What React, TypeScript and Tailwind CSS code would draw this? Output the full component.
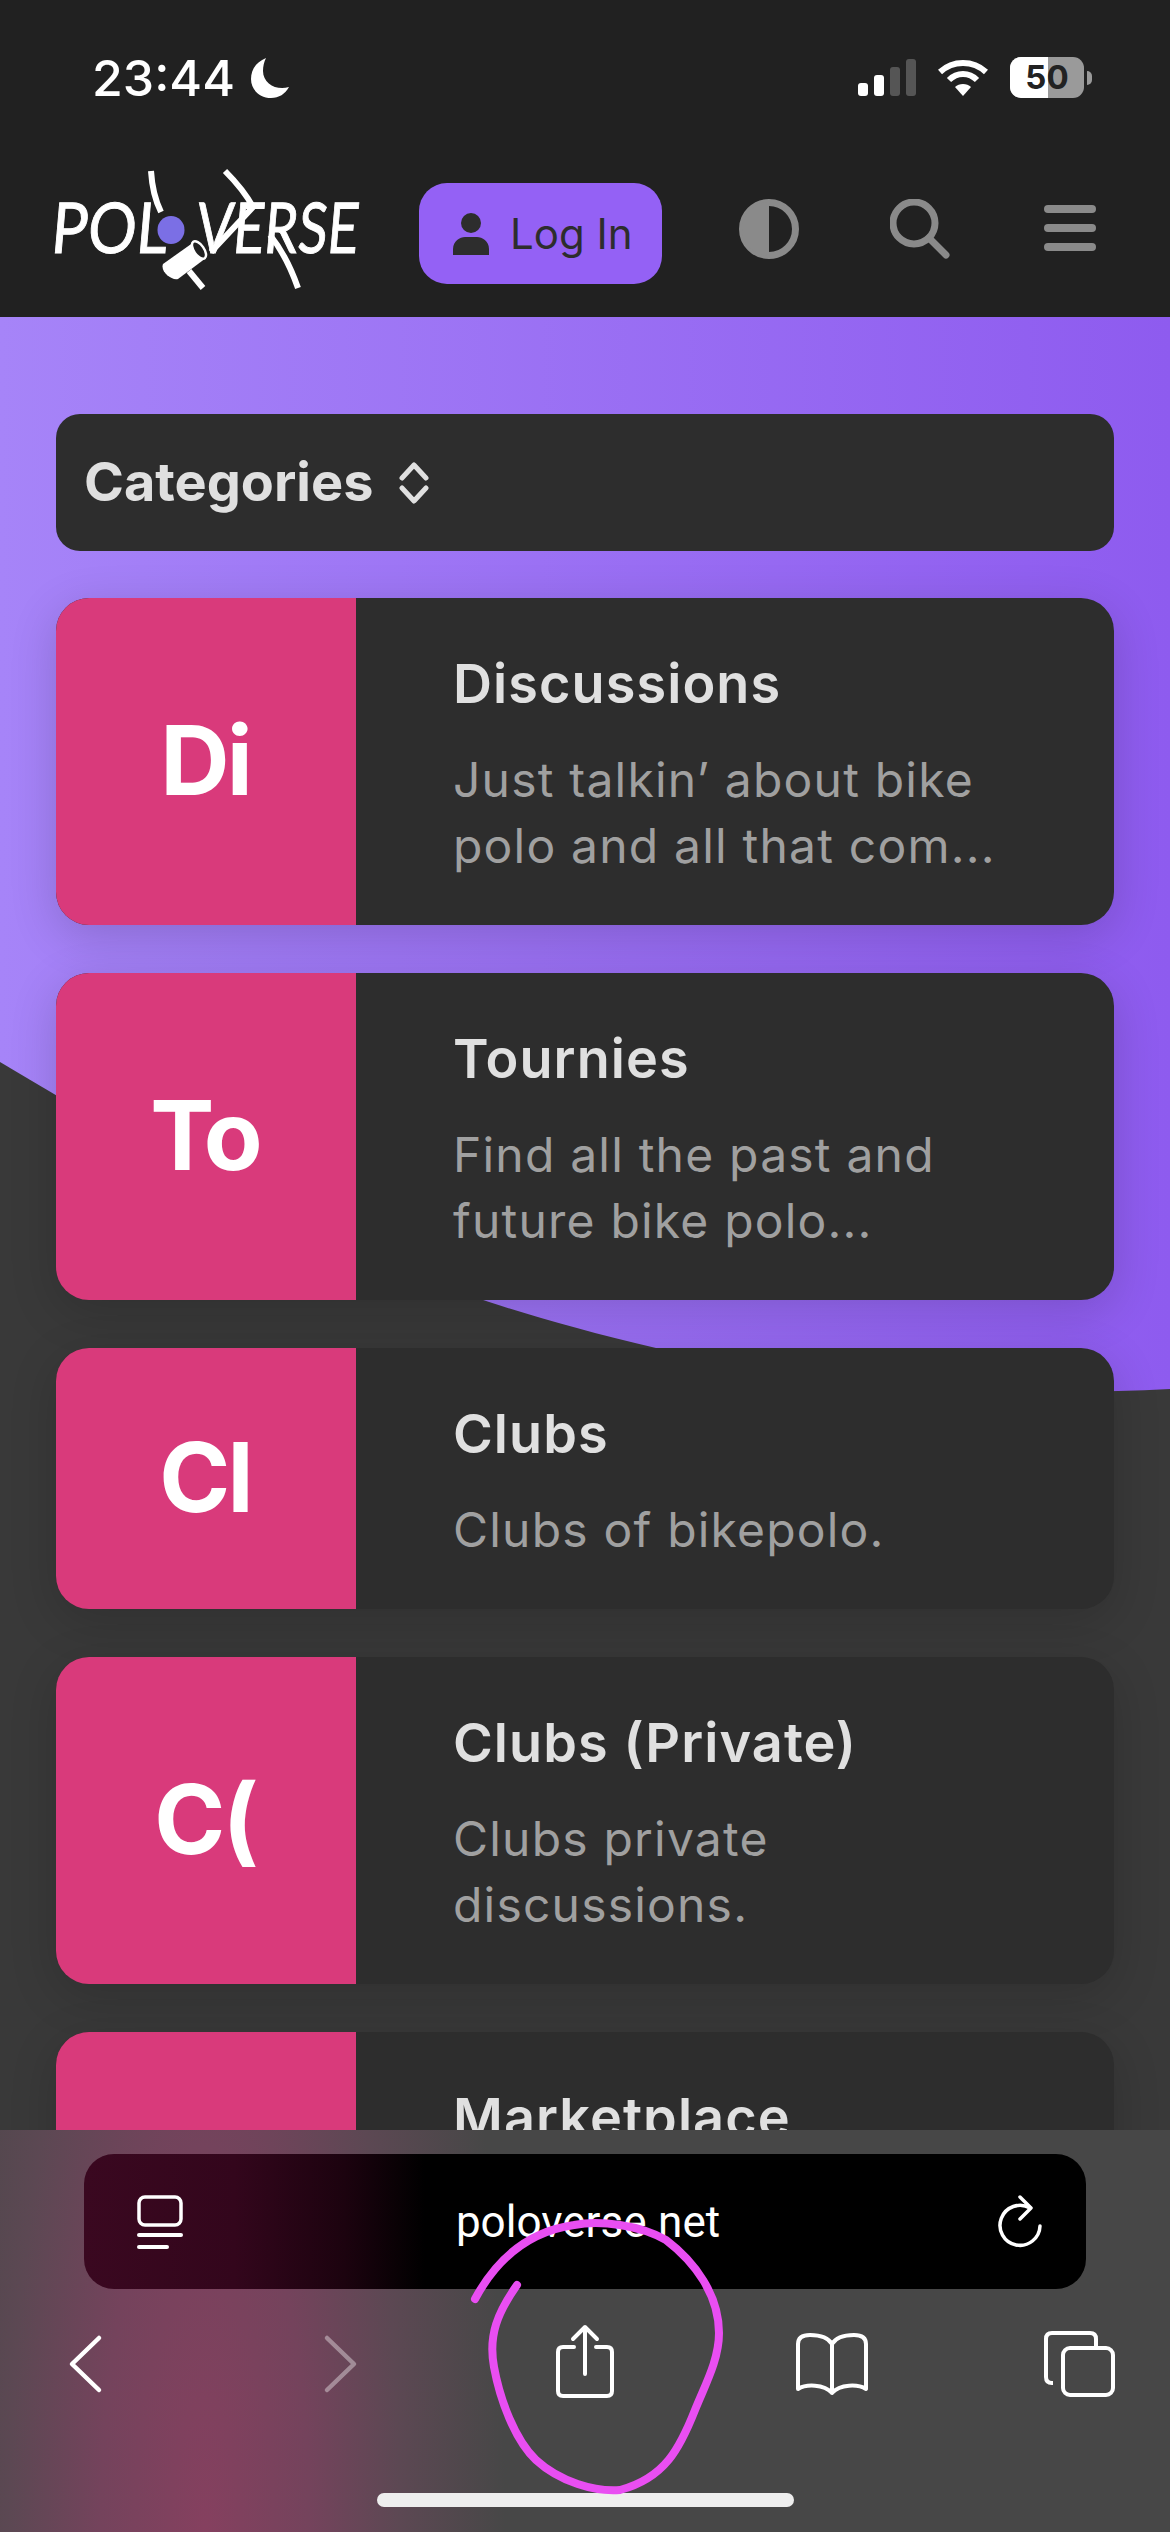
import React from "react";

const cards = [
  { m: "Di", t: "Discussions", d: "Just talkin’ about bike polo and all that com..." },
  { m: "To", t: "Tournies", d: "Find all the past and future bike polo..." },
  { m: "Cl", t: "Clubs", d: "Clubs of bikepolo." },
  { m: "C(", t: "Clubs (Private)", d: "Clubs private discussions." },
  { m: "", t: "Marketplace", d: "" },
];

function Logo() {
  return (
    <svg width="306" height="115" viewBox="52 171 306 115" className="shrink-0 overflow-visible">
      <g fill="#fff" stroke="#fff" strokeWidth="1" fontFamily="Lato, sans-serif" fontSize="70" fontWeight="400" transform="skewX(-5)">
        <text x="72" y="253" textLength="116" lengthAdjust="spacingAndGlyphs">POL</text>
        <text x="217" y="253" textLength="162" lengthAdjust="spacingAndGlyphs">VERSE</text>
      </g>
      <ellipse cx="171" cy="230" rx="13.5" ry="14" fill="#7b6fe5" />
      <path d="M151 171C152 187 155 200 161 212" fill="none" stroke="#fff" strokeWidth="6" />
      <path d="M225 171C236 182 246 194 253 207L211 252" fill="none" stroke="#fff" strokeWidth="6" />
      <path d="M270 235C282 250 291 268 298 288" fill="none" stroke="#fff" strokeWidth="6" />
      <path d="M189 271L203 288" fill="none" stroke="#fff" strokeWidth="6" />
      <path d="M163 264L194 242C200 240 207 252 206 258L178 279C172 281 160 272 163 264Z" fill="#fff" />
      <ellipse cx="199" cy="250" rx="5" ry="10" transform="rotate(-35 199 250)" fill="#212121" stroke="#fff" strokeWidth="2.5" />
    </svg>
  );
}

function StatusBar() {
  return (
    <div className="flex h-[117px] items-start justify-between pt-[57px] pl-[92px] pr-[78px]">
      <div className="flex items-center gap-[16px]">
        <span className="font-['Inter'] text-[50px] leading-[42px] font-medium text-white">23:44</span>
        <svg width="38" height="40" viewBox="0 0 38 40">
          <path d="M15 0C5 4 0 12 0 21C0 32 9 40 20 40C28 40 34 36 38 29C26 33 12 26 12 13C12 8 13 4 15 0Z" fill="#fff" />
        </svg>
      </div>
      <div className="flex items-center gap-[22px] h-[41px]">
        <svg width="58" height="37" viewBox="0 0 58 37">
          <rect x="0" y="24" width="10" height="13" rx="3" fill="#fff" />
          <rect x="16" y="16" width="10" height="21" rx="3" fill="#fff" />
          <rect x="32" y="8" width="10" height="29" rx="3" fill="#555" />
          <rect x="48" y="0" width="10" height="37" rx="3" fill="#555" />
        </svg>
        <svg width="50" height="37" viewBox="0 0 50 37">
          <path d="M2 13C15 1 35 1 48 13" fill="none" stroke="#fff" strokeWidth="6" />
          <path d="M11 21C19 13 31 13 39 21" fill="none" stroke="#fff" strokeWidth="6" />
          <path d="M25 37L17 28C21 24 29 24 33 28Z" fill="#fff" />
        </svg>
        <div className="flex items-center gap-[3px]">
          <div className="relative h-[41px] w-[74px] overflow-hidden rounded-[11px] bg-[#9a9a9a]">
            <div className="h-full w-[38px] bg-white" />
            <span className="absolute inset-0 flex items-center justify-center font-['Inter'] text-[33px] font-bold leading-none text-[#222]">50</span>
          </div>
          <div className="h-[14px] w-[5px] rounded-r-full bg-[#9a9a9a]" />
        </div>
      </div>
    </div>
  );
}

function NavBar() {
  return (
    <div className="flex h-[200px] items-start pl-[52px] pt-[54px]">
      <Logo />
      <div className="ml-[61px] mt-[12px] flex h-[101px] w-[243px] items-center gap-[21px] rounded-[28px] bg-[#9461f5] pl-[34px]">
        <svg width="36" height="42" viewBox="0 0 36 42">
          <circle cx="18" cy="10" r="10" fill="#2d2d2d" />
          <path d="M0 42V36C0 28 7 24 12 24H24C29 24 36 28 36 36V42Z" fill="#2d2d2d" />
        </svg>
        <span className="font-['Inter'] text-[42px] leading-none text-[#2d2d2d]">Log In</span>
      </div>
      <svg width="60" height="60" viewBox="0 0 60 60" className="ml-[77px] mt-[28px]">
        <circle cx="30" cy="30" r="26.5" fill="none" stroke="#8a8a8a" strokeWidth="7" />
        <path d="M30 3A27 27 0 0 0 30 57Z" fill="#8a8a8a" />
      </svg>
      <svg width="60" height="60" viewBox="0 0 60 60" className="ml-[91px] mt-[28px]">
        <circle cx="24" cy="24" r="21" fill="none" stroke="#8a8a8a" strokeWidth="7" />
        <path d="M39 39L56 56" stroke="#8a8a8a" strokeWidth="7" strokeLinecap="round" />
      </svg>
      <div className="ml-[94px] mt-[34px] flex h-[46px] w-[52px] flex-col justify-between">
        <div className="h-[8px] rounded-full bg-[#8a8a8a]" />
        <div className="h-[8px] rounded-full bg-[#8a8a8a]" />
        <div className="h-[8px] rounded-full bg-[#8a8a8a]" />
      </div>
    </div>
  );
}

function Card({ m, t, d }: { m: string; t: string; d: string }) {
  return (
    <div className="flex min-h-[259px] overflow-hidden rounded-[33px] bg-[#2d2d2d] shadow-[0_12px_48px_rgba(0,0,0,0.16)]">
      <div className="flex w-[300px] shrink-0 items-center justify-center bg-[#d93a7b] pb-[4px] pr-[2px] font-['Inter'] text-[96px] font-bold leading-none tracking-[-0.03em] text-white">
        {m}
      </div>
      <div className="flex-1 pb-[46px] pl-[97px] pr-[96px] pt-[48px]">
        <div className="font-['Inter'] text-[54px] font-semibold leading-[76px] tracking-[0.02em] text-[#e0e0e0]">{t}</div>
        {d && <div className="mt-[25px] font-['Inter'] text-[48px] leading-[66px] tracking-[0.025em] text-[#a0a0a0]">{d}</div>}
      </div>
    </div>
  );
}

function Toolbar() {
  return (
    <div className="absolute bottom-0 left-0 h-[402px] w-full bg-[#474747] bg-[radial-gradient(ellipse_300px_1100px_at_205px_402px,#85405f_0%,#74435c_35%,#5c4853_65%,#474747_100%)]">
      <div className="mx-[84px] mt-[24px] flex h-[135px] items-center justify-between rounded-[30px] bg-[linear-gradient(90deg,#3a0820_0%,#33061c_15%,#1c030f_26%,#000_34%,#000_100%)] pl-[53px] pr-[44px]">
        <svg width="46" height="54" viewBox="0 0 46 54">
          <rect x="2" y="2" width="42" height="28" rx="6" fill="none" stroke="#fff" strokeWidth="3.5" />
          <path d="M2 40H44" stroke="#fff" strokeWidth="4" strokeLinecap="round" />
          <path d="M2 52H30" stroke="#fff" strokeWidth="4" strokeLinecap="round" />
        </svg>
        <span className="mr-[5px] font-['Roboto'] text-[44px] leading-none text-white">poloverse.net</span>
        <svg width="44" height="54" viewBox="0 0 44 54">
          <path d="M32 13A20 20 0 1 0 42 31" fill="none" stroke="#fff" strokeWidth="3.5" strokeLinecap="round" />
          <path d="M22 2L33 13L22 24" fill="none" stroke="#fff" strokeWidth="3.5" strokeLinecap="round" strokeLinejoin="round" />
        </svg>
      </div>
      <div className="mt-[35px] flex items-center justify-between pl-[46px] pr-[50px]">
        <svg width="80" height="80" viewBox="0 0 80 80">
          <path d="M53 14L26 40L53 66" fill="none" stroke="#fff" strokeWidth="4.5" strokeLinecap="round" strokeLinejoin="round" />
        </svg>
        <svg width="80" height="80" viewBox="0 0 80 80">
          <path d="M32 14L59 40L32 66" fill="none" stroke="#fff" strokeOpacity="0.38" strokeWidth="4.5" strokeLinecap="round" strokeLinejoin="round" />
        </svg>
        <svg width="80" height="80" viewBox="0 0 80 80">
          <g transform="translate(2 0)">
            <path d="M29 23H18C14 23 13 25 13 28V67C13 71 15 72 18 72H62C66 72 67 70 67 67V28C67 25 66 23 62 23H51" fill="none" stroke="#fff" strokeWidth="4" strokeLinecap="round" />
            <path d="M40 50V3M28 15L40 3L52 15" fill="none" stroke="#fff" strokeWidth="4" strokeLinecap="round" strokeLinejoin="round" />
          </g>
        </svg>
        <svg width="80" height="80" viewBox="0 0 80 80">
          <path d="M40 20C36 13 28 11 18 11C10 11 6 14 6 20V65C14 60 32 60 40 69C48 60 66 60 74 65V20C74 14 70 11 62 11C52 11 44 13 40 20V69" fill="none" stroke="#fff" strokeWidth="4" strokeLinecap="round" strokeLinejoin="round" />
        </svg>
        <svg width="80" height="80" viewBox="0 0 80 80">
          <path d="M13 59H12C8 59 6 57 6 53V15C6 11 8 9 12 9H50C54 9 56 11 56 15V24" fill="none" stroke="#fff" strokeWidth="4" />
          <rect x="23" y="24" width="50" height="47" rx="7" fill="none" stroke="#fff" strokeWidth="4" />
        </svg>
      </div>
      <div className="absolute left-[377px] top-[363px] h-[14px] w-[417px] rounded-full bg-[#eeeeee]" />
    </div>
  );
}

export default function App() {
  return (
    <div className="relative h-[2532px] w-[1170px] overflow-hidden bg-[#393939] font-['Inter',sans-serif]">
      <svg className="absolute left-0 top-0" width="1170" height="2532" viewBox="0 0 1170 2532">
        <defs>
          <linearGradient id="pv" x1="0" y1="0" x2="1" y2="0">
            <stop offset="0" stopColor="#a684f8" />
            <stop offset="1" stopColor="#8e5bef" />
          </linearGradient>
        </defs>
        <path d="M0 317H1170V1389C1000 1398 820 1385 656 1348C560 1326 480 1300 440 1285C280 1225 130 1140 0 1062Z" fill="url(#pv)" />
      </svg>
      <div className="relative">
        <div className="bg-[#212121]">
          <StatusBar />
          <NavBar />
        </div>
        <main className="flex flex-col gap-[48px] px-[56px] pt-[97px]">
          <div className="-mb-[1px] flex h-[137px] items-center gap-[26px] rounded-[24px] bg-[#2d2d2d] pl-[28px]">
            <span className="font-['Inter'] text-[54px] font-bold leading-none text-[#e0e0e0] -mt-[2px]">Categories</span>
            <svg width="30" height="42" viewBox="0 0 30 42">
              <path d="M3 16L15 3L27 16M3 26L15 39L27 26" fill="none" stroke="#e0e0e0" strokeWidth="5" strokeLinecap="round" strokeLinejoin="round" />
            </svg>
          </div>
          {cards.map((c) => (
            <Card key={c.t} {...c} />
          ))}
        </main>
      </div>
      <Toolbar />
      <svg className="absolute left-0 top-0 pointer-events-none" width="1170" height="2532" viewBox="0 0 1170 2532">
        <path
          d="M475 2299C495 2262 525 2232 574 2225C600 2220 640 2225 666 2240C695 2262 719 2295 719 2333C719 2360 705 2385 695 2410C680 2448 665 2478 620 2490C595 2492 560 2482 536 2460C515 2440 500 2400 494 2367C488 2335 498 2312 517 2285"
          fill="none"
          stroke="#e94ef2"
          strokeWidth="8"
          strokeLinecap="round"
        />
      </svg>
    </div>
  );
}
